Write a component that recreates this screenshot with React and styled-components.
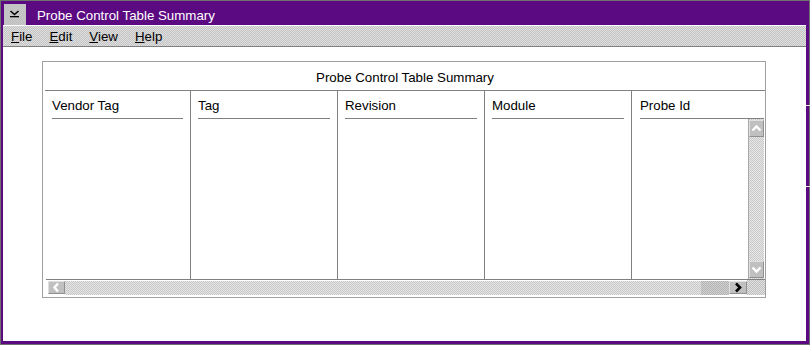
import React from 'react';
import styled, { createGlobalStyle, css } from 'styled-components';

const Global = createGlobalStyle`
  html, body { margin: 0; padding: 0; background: #fff; }
  body { font-family: "Liberation Sans", Arial, sans-serif; }
`;

const dither = (base, dot) => css`
  background-color: ${base};
  background-image: conic-gradient(${dot} 25%, transparent 0 50%, ${dot} 0 75%, transparent 0);
  background-size: 2px 2px;
`;

const Window = styled.div`
  position: relative;
  box-sizing: border-box;
  width: 810px;
  height: 345px;
  border: 1px solid #707070;
  background: #5c0a82;
  padding: 0 3px 3px 2px;
  display: flex;
  flex-direction: column;
  font-family: "Liberation Sans", Arial, sans-serif;
  font-size: 13.3px;
  color: #000;
`;

const Grip = styled.span`
  position: absolute;
  right: -1px;
  width: 4px;
  height: 1px;
  background: #fff;
  top: ${(p) => p.$y}px;
`;

const TitleBar = styled.div`
  height: 24px;
  box-sizing: border-box;
  padding-top: 3px;
  display: flex;
  align-items: flex-start;
`;

const SysButton = styled.div`
  width: 22px;
  height: 21px;
  margin-left: 1px;
  ${dither('#c0c0c0', '#c8c8c8')}
  display: flex;
`;

const TitleText = styled.div`
  margin: 4px 0 0 11px;
  line-height: 15px;
  color: #fff;
`;

const MenuBar = styled.div`
  height: 20px;
  border-top: 1px solid #fff;
  border-bottom: 1px solid #808080;
  ${dither('#c4c4c4', '#dedede')}
  display: flex;
  gap: 1px;
`;

const MenuItem = styled.div`
  padding: 3px 8px 0;
  line-height: 15px;
  & u { text-decoration: underline; text-underline-offset: 1px; }
`;

const Content = styled.div`
  flex: 1;
  background: #fff;
  padding: 14px 0 0 39px;
`;

const TableBox = styled.div`
  box-sizing: border-box;
  width: 724px;
  height: 237px;
  border: 1px solid #a0a0a0;
  padding: 0 0 2px 2px;
  display: flex;
  flex-direction: column;
`;

const TableTitle = styled.div`
  height: 20px;
  padding-top: 8px;
  line-height: 15px;
  text-align: center;
  border-bottom: 1px solid #808080;
`;

const Columns = styled.div`
  height: 189px;
  display: flex;
`;

const Column = styled.div`
  box-sizing: border-box;
  width: ${(p) => (p.$w ? `${p.$w}px` : 'auto')};
  flex: ${(p) => (p.$w ? 'none' : '1')};
  border-left: ${(p) => (p.$first ? 'none' : '1px solid #808080')};
  display: flex;
  flex-direction: column;
`;

const Header = styled.div`
  padding: 7px ${(p) => (p.$last ? '1px 0 8px' : '7px 0')};
`;

const HeaderLabel = styled.div`
  line-height: 15px;
  padding-bottom: 5px;
  border-bottom: 1px solid #808080;
  white-space: nowrap;
`;

const ColumnBody = styled.div`
  flex: 1;
  display: flex;
  justify-content: flex-end;
`;

const VScroll = styled.div`
  width: 16px;
  margin-right: 1px;
  box-sizing: border-box;
  border-left: 1px solid #a8a8a8;
  padding: 1px 0;
  ${dither('#c8c8c8', '#e8e8e8')}
  display: flex;
  flex-direction: column;
  justify-content: space-between;
`;

const ScrollButton = styled.div`
  box-sizing: border-box;
  width: ${(p) => p.$w}px;
  height: ${(p) => p.$h}px;
  background: #c0c0c0;
  border-top: 1px solid #e0e0e0;
  border-left: 1px solid #e0e0e0;
  border-right: 1px solid #909090;
  border-bottom: 1px solid #909090;
  display: flex;
  align-items: center;
  justify-content: center;
  flex: none;
`;

const HScroll = styled.div`
  height: 14px;
  margin-left: 1px;
  border-top: 1px solid #808080;
  padding: 1px 0 0 2px;
  box-sizing: content-box;
  display: flex;
  background: #fff;
`;

const Track = styled.div`
  flex: 1;
  ${dither('#c8c8c8', '#e6e6e6')}
`;

const TrackDark = styled.div`
  width: 28px;
  ${dither('#b4b4b4', '#d0d0d0')}
`;

const Corner = styled.div`
  width: 18px;
  margin-top: -1px;
  ${dither('#c0c0c0', '#e0e0e0')}
`;

const Chevron = ({ w, h, points, color = '#fff', sw = 2.4 }) => (
  <svg width={w} height={h} viewBox={`0 0 ${w} ${h}`}>
    <polyline points={points} fill="none" stroke={color} strokeWidth={sw} strokeLinejoin="miter" strokeLinecap="butt" />
  </svg>
);

const columns = [
  { label: 'Vendor Tag', w: 145, first: true },
  { label: 'Tag', w: 147 },
  { label: 'Revision', w: 147 },
  { label: 'Module', w: 147 },
];

export default function App() {
  return (
    <>
      <Global />
      <Window>
        <Grip $y={104} />
        <Grip $y={185} />
        <TitleBar>
          <SysButton>
            <svg width="22" height="21" viewBox="0 0 22 21">
              <polyline points="6.5,7 10.5,10.5 14.5,7" fill="none" stroke="#000" strokeWidth="1.6" />
              <rect x="6" y="12" width="9" height="1.3" fill="#000" />
            </svg>
          </SysButton>
          <TitleText>Probe Control Table Summary</TitleText>
        </TitleBar>
        <MenuBar>
          <MenuItem><u>F</u>ile</MenuItem>
          <MenuItem><u>E</u>dit</MenuItem>
          <MenuItem><u>V</u>iew</MenuItem>
          <MenuItem><u>H</u>elp</MenuItem>
        </MenuBar>
        <Content>
          <TableBox>
            <TableTitle>Probe Control Table Summary</TableTitle>
            <Columns>
              {columns.map((c) => (
                <Column key={c.label} $w={c.w} $first={c.first}>
                  <Header>
                    <HeaderLabel>{c.label}</HeaderLabel>
                  </Header>
                </Column>
              ))}
              <Column>
                <Header $last>
                  <HeaderLabel>Probe Id</HeaderLabel>
                </Header>
                <ColumnBody>
                  <VScroll>
                    <ScrollButton $w={15} $h={17}>
                      <Chevron w={13} h={15} points="2.5,9.5 6.5,5.5 10.5,9.5" />
                    </ScrollButton>
                    <ScrollButton $w={15} $h={17}>
                      <Chevron w={13} h={15} points="2.5,5.5 6.5,9.5 10.5,5.5" />
                    </ScrollButton>
                  </VScroll>
                </ColumnBody>
              </Column>
            </Columns>
            <HScroll>
              <ScrollButton $w={17} $h={13}>
                <Chevron w={15} h={11} points="9,1.5 5.5,5.5 9,9.5" />
              </ScrollButton>
              <Track />
              <TrackDark />
              <ScrollButton $w={18} $h={13}>
                <Chevron w={16} h={11} points="6,1.5 10,5.5 6,9.5" color="#000" sw={2.6} />
              </ScrollButton>
              <Corner />
            </HScroll>
          </TableBox>
        </Content>
      </Window>
    </>
  );
}
